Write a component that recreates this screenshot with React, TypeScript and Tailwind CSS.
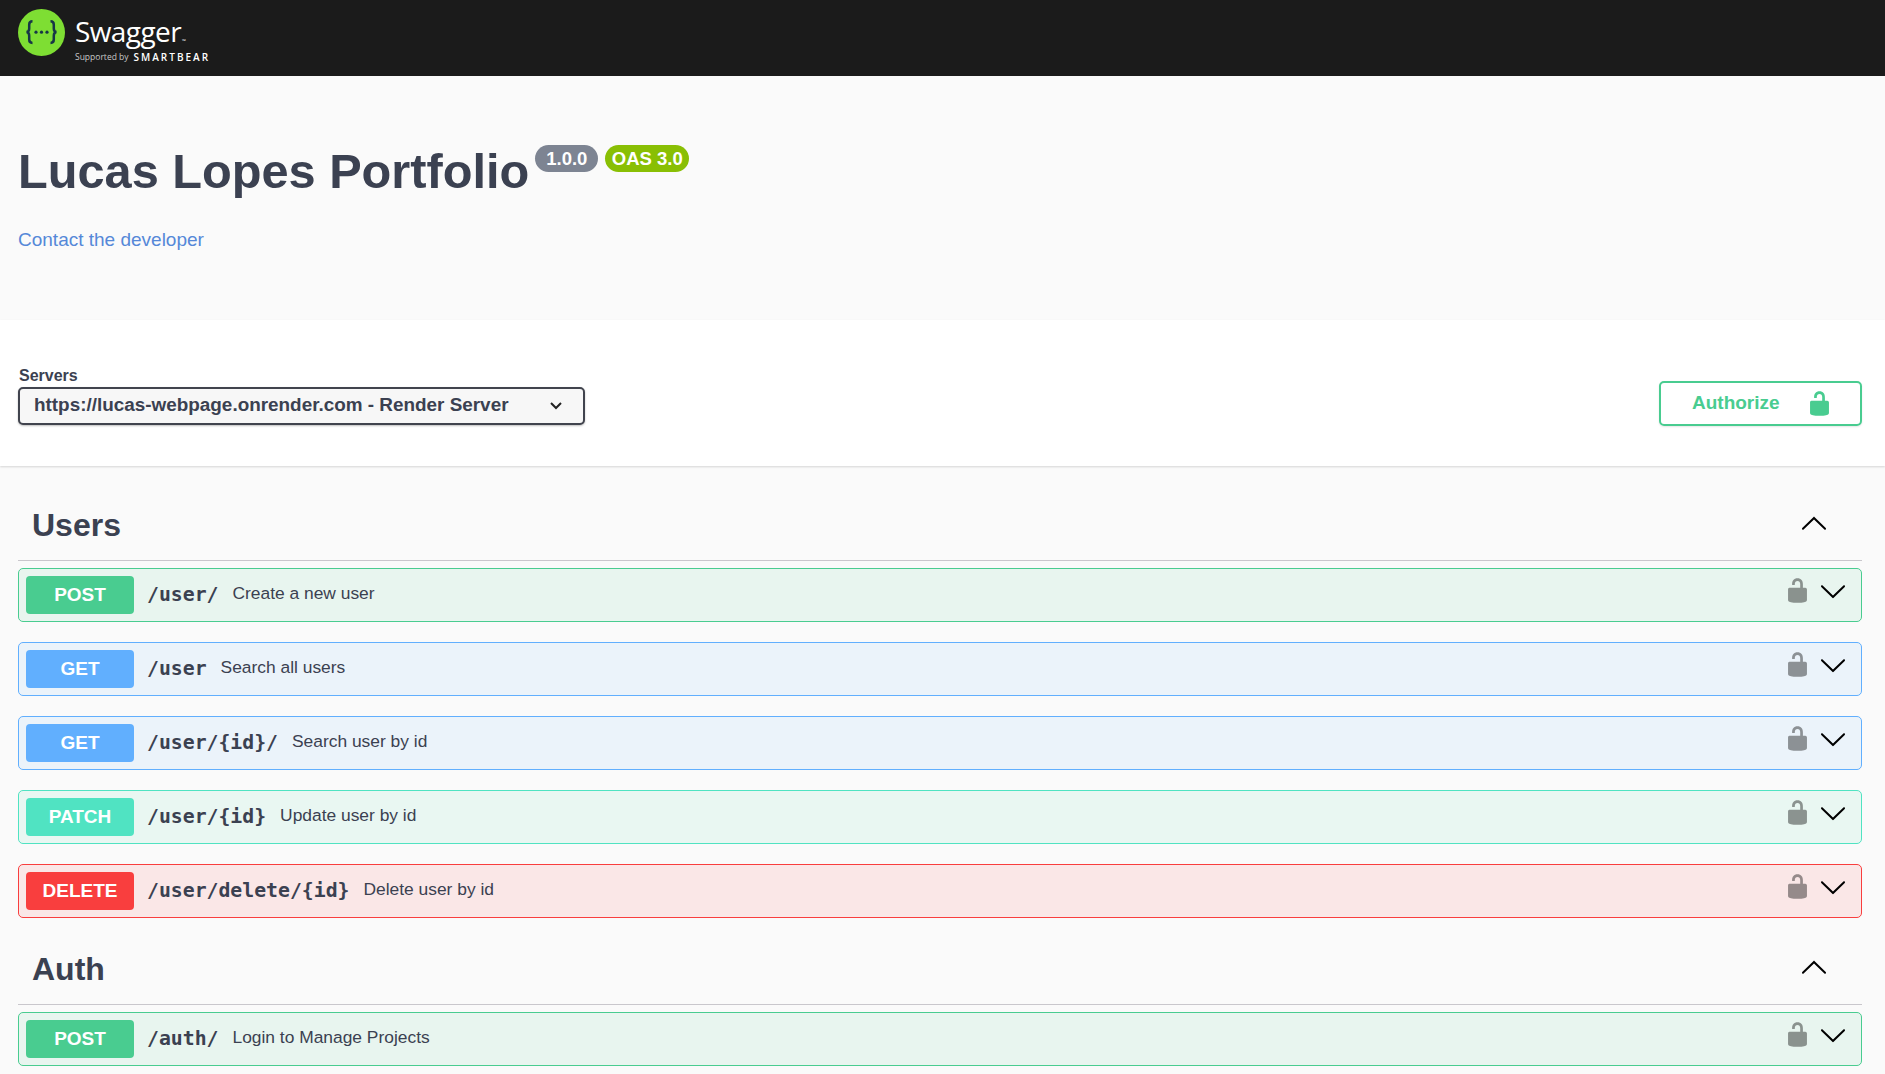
import * as React from "react";

type Method = "POST" | "GET" | "PATCH" | "DELETE";

const methodStyles: Record<Method, { row: string; badge: string }> = {
  POST: { row: "bg-[#e8f5ef] border-[#49cc90]", badge: "bg-[#49cc90]" },
  GET: { row: "bg-[#ebf3fa] border-[#61affe]", badge: "bg-[#61affe]" },
  PATCH: { row: "bg-[#e9f7f2] border-[#50e3c2]", badge: "bg-[#50e3c2]" },
  DELETE: { row: "bg-[#fae7e7] border-[#f93e3e]", badge: "bg-[#f93e3e]" },
};

const sections = [
  {
    name: "Users",
    ops: [
      { method: "POST" as Method, path: "/user/", desc: "Create a new user" },
      { method: "GET" as Method, path: "/user", desc: "Search all users" },
      { method: "GET" as Method, path: "/user/{id}/", desc: "Search user by id" },
      { method: "PATCH" as Method, path: "/user/{id}", desc: "Update user by id" },
      { method: "DELETE" as Method, path: "/user/delete/{id}", desc: "Delete user by id" },
    ],
  },
  {
    name: "Auth",
    ops: [{ method: "POST" as Method, path: "/auth/", desc: "Login to Manage Projects" }],
  },
];

function LockIcon({ className }: { className: string }) {
  return (
    <svg viewBox="0 0 20 20" className={className} fill="currentColor">
      <path d="M15.8 8H14V5.6C14 2.703 12.665 1 10 1 7.334 1 6 2.703 6 5.6V6h2v-.801C8 3.754 8.797 3 10 3c1.203 0 2 .754 2 2.199V8H4c-.553 0-1 .646-1 1.199V17c0 .549.428 1.139.951 1.307l1.197.387C5.672 18.861 6.55 19 7.1 19h5.8c.549 0 1.428-.139 1.951-.307l1.196-.387c.524-.167.953-.757.953-1.306V9.199C17 8.646 16.352 8 15.8 8z" />
    </svg>
  );
}

function Arrow({ className }: { className: string }) {
  return (
    <svg viewBox="0 0 20 20" className={className} fill="currentColor">
      <path d="M17.418 6.109c.272-.268.709-.268.979 0s.271.701 0 .969l-7.908 7.83c-.27.268-.707.268-.979 0l-7.908-7.83c-.27-.268-.27-.701 0-.969.271-.268.709-.268.979 0L10 13.25l7.418-7.141z" />
    </svg>
  );
}

function Logo() {
  return (
    <svg viewBox="0 0 47 47" className="h-[47px] w-[47px] shrink-0">
      <circle cx="23.5" cy="23.5" r="23.5" fill="#7ede33" />
      <path
        d="M14.5 12.3c-2.6 0-3.3 1.3-3.3 3.4v3.8c0 2-.8 3.3-2.6 3.6 1.8.3 2.6 1.6 2.6 3.6v3.8c0 2.1.7 3.4 3.3 3.4M32.5 12.3c2.6 0 3.3 1.3 3.3 3.4v3.8c0 2 .8 3.3 2.6 3.6-1.8.3-2.6 1.6-2.6 3.6v3.8c0 2.1-.7 3.4-3.3 3.4"
        fill="none"
        stroke="#173647"
        strokeWidth="2.5"
      />
      <circle cx="18" cy="23.2" r="1.6" fill="#173647" />
      <circle cx="23.5" cy="23.2" r="1.6" fill="#173647" />
      <circle cx="29" cy="23.2" r="1.6" fill="#173647" />
    </svg>
  );
}

function OpRow({ method, path, desc }: { method: Method; path: string; desc: string }) {
  const s = methodStyles[method];
  return (
    <div className={`mb-5 flex h-[54px] items-center rounded-[5px] border px-[7px] ${s.row}`}>
      <div
        className={`flex h-[38px] w-[108px] items-center justify-center rounded-[4px] text-[19px] font-bold text-white ${s.badge}`}
      >
        {method}
      </div>
      <span className="ml-[13px] font-['DejaVu_Sans_Mono',monospace] text-[19.8px] font-bold text-[#3b4151]">
        {path}
      </span>
      <span className="mb-[3px] ml-[14px] text-[17.4px] text-[#3b4151]">{desc}</span>
      <div className="ml-auto mb-[10px] flex items-center">
        <LockIcon className="h-[27px] w-[27px] text-black opacity-40" />
        <Arrow className="ml-[8px] mr-[7px] mt-[2px] h-[28px] w-[28px] text-black" />
      </div>
    </div>
  );
}

export default function App() {
  return (
    <div className="h-screen overflow-hidden bg-[#fafafa] font-['Liberation_Sans',Arial,sans-serif] text-[#3b4151]">
      {/* Top bar */}
      <div className="flex h-[76px] items-start bg-[#1b1b1b] pl-[18px] pt-[9px]">
        <Logo />
        <div className="ml-[10px] flex flex-col font-['Open_Sans',sans-serif] text-white">
          <div className="flex items-end pt-[3px]">
            <span className="text-[28px] leading-[38px] font-normal tracking-[-0.6px]">Swagger</span>
            <span className="mb-[6px] ml-[1px] text-[5px] leading-none">™</span>
          </div>
          <div className="mt-[2px] flex items-center leading-none">
            <span className="text-[8.5px] text-[#c8c8c8]">Supported by</span>
            <span className="ml-[5px] text-[10px] font-semibold tracking-[2px]">SMARTBEAR</span>
          </div>
        </div>
      </div>

      {/* Info */}
      <div className="h-[244px] pl-[18px] pt-[68px]">
        <div className="flex items-start">
          <h1 className="mb-[2px] text-[48.7px] leading-[54px] font-bold">Lucas Lopes Portfolio</h1>
          <span className="ml-[6px] mt-[1px] flex h-[27px] w-[63px] items-center justify-center rounded-[14px] bg-[#7d8492] text-[18.5px] font-bold text-white">
            1.0.0
          </span>
          <span className="ml-[7px] mt-[1px] flex h-[27px] w-[84px] items-center justify-center rounded-[14px] bg-[#89bf04] text-[18.5px] font-bold text-white">
            OAS 3.0
          </span>
        </div>
        <a className="mt-[28px] block text-[19px] leading-[24px] text-[#5588d8]">Contact the developer</a>
      </div>

      {/* Servers + Authorize */}
      <div className="flex h-[146px] items-start justify-between bg-white pl-[18px] pr-[23px] shadow-[0_1px_2px_rgba(0,0,0,0.15)]">
        <div className="pt-[46px]">
          <div className="pl-[1px] text-[16px] leading-[19px] font-bold">Servers</div>
          <div className="mt-[2px] flex h-[38px] w-[567px] items-center justify-between rounded-[5px] border-2 border-[#41444e] bg-[#f7f7f7] pb-[1px] pl-[14px] pr-[21px] text-[18.9px] font-bold shadow-[0_1px_2px_rgba(0,0,0,0.25)]">
            <span>https://lucas-webpage.onrender.com - Render Server</span>
            <svg viewBox="0 0 12 8" className="h-[8px] w-[12px]" fill="none" stroke="#222" strokeWidth="2">
              <path d="M1 1l5 5 5-5" />
            </svg>
          </div>
        </div>
        <div className="pt-[61px]">
          <div className="flex h-[45px] w-[203px] items-center rounded-[5px] border-2 border-[#49cc90] pl-[31px] text-[19px] font-bold text-[#49cc90] shadow-[0_1px_2px_rgba(0,0,0,0.1)]">
            <span>Authorize</span>
            <LockIcon className="ml-[26px] h-[27px] w-[27px]" />
          </div>
        </div>
      </div>

      {/* Operation groups */}
      <div className="pl-[18px] pr-[23px] pt-[27px]">
        {sections.map((section) => (
          <div key={section.name} className="-mb-px">
            <div className="mb-[7px] flex h-[68px] items-center justify-between border-b border-[#c9c7cc] pb-[4px] pl-[14px] pr-[34px]">
              <h3 className="text-[32px] font-bold">{section.name}</h3>
              <Arrow className="mb-[1px] h-[28px] w-[28px] rotate-180 text-black" />
            </div>
            {section.ops.map((op) => (
              <OpRow key={op.method + op.path} {...op} />
            ))}
          </div>
        ))}
      </div>
    </div>
  );
}
